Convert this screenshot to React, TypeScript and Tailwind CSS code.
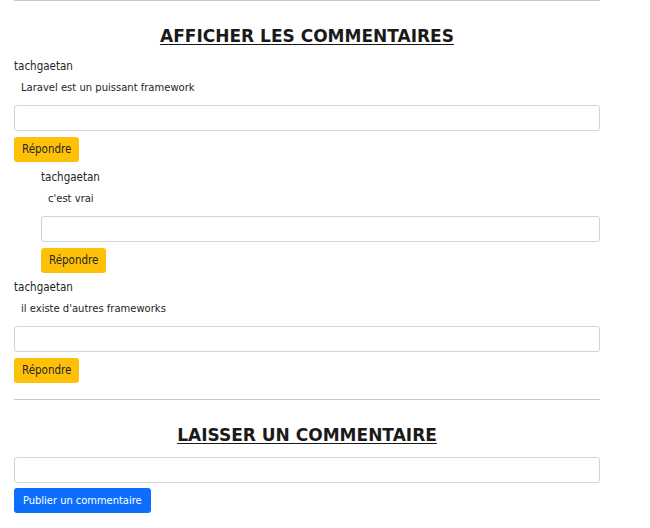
import { useState } from 'react';

type Comment = {
  id: number;
  author: string;
  body: string;
  replies?: Comment[];
};

const comments: Comment[] = [
  {
    id: 1,
    author: 'tachgaetan',
    body: 'Laravel est un puissant framework',
    replies: [{ id: 2, author: 'tachgaetan', body: "c'est vrai" }],
  },
  { id: 3, author: 'tachgaetan', body: "il existe d'autres frameworks" },
];

const font = { fontFamily: '"DejaVu Sans", Verdana, sans-serif' };
const btnFont = { fontFamily: '"DejaVu Sans Condensed", "DejaVu Sans", sans-serif' };

function CommentItem({ comment }: { comment: Comment }) {
  const [reply, setReply] = useState('');
  return (
    <div className="flex flex-col">
      <div className="text-[11.5px] leading-[16px] text-[#212529]" style={btnFont}>
        {comment.author}
      </div>
      <div className="mt-[7px] pl-[7px] text-[10px] leading-[14px] text-[#212529]">{comment.body}</div>
      <input
        value={reply}
        onChange={(e) => setReply(e.target.value)}
        className="mt-[10px] h-[26px] w-full rounded-[3px] border border-[#ced4da] bg-white px-2 text-[12px] outline-none"
      />
      <div className="mt-[6px] flex">
        <button
          className="h-[25px] rounded-[3px] bg-[#ffc107] px-[8px] text-[11.5px] leading-none text-[#212529]"
          style={btnFont}
        >
          Répondre
        </button>
      </div>
      {comment.replies?.map((r) => (
        <div key={r.id} className="mt-[7px] pl-[27px]">
          <CommentItem comment={r} />
        </div>
      ))}
    </div>
  );
}

export default function App() {
  const [text, setText] = useState('');
  return (
    <div className="min-h-[528px] w-[650px] bg-white" style={font}>
      <div className="ml-[14px] flex w-[586px] flex-col">
        <hr className="border-t border-[#c8c8c8]" />
        <h2 className="mt-[24px] text-center text-[17px] font-bold leading-[22px] text-[#1a1a1a] underline underline-offset-2">
          AFFICHER LES COMMENTAIRES
        </h2>
        <div className="mt-[11px] flex flex-col gap-[6px]">
          {comments.map((c) => (
            <CommentItem key={c.id} comment={c} />
          ))}
        </div>
        <hr className="mt-[16px] border-t border-[#c8c8c8]" />
        <h2 className="mt-[24px] text-center text-[17px] font-bold leading-[22px] text-[#1a1a1a] underline underline-offset-2">
          LAISSER UN COMMENTAIRE
        </h2>
        <input
          value={text}
          onChange={(e) => setText(e.target.value)}
          className="mt-[11px] h-[26px] w-full rounded-[3px] border border-[#ced4da] bg-white px-2 text-[12px] outline-none"
        />
        <div className="mt-[5px] flex">
          <button
            className="h-[25px] rounded-[3px] bg-[#0d6efd] px-[9px] text-[11px] leading-none text-white"
            style={btnFont}
          >
            Publier un commentaire
          </button>
        </div>
      </div>
    </div>
  );
}
